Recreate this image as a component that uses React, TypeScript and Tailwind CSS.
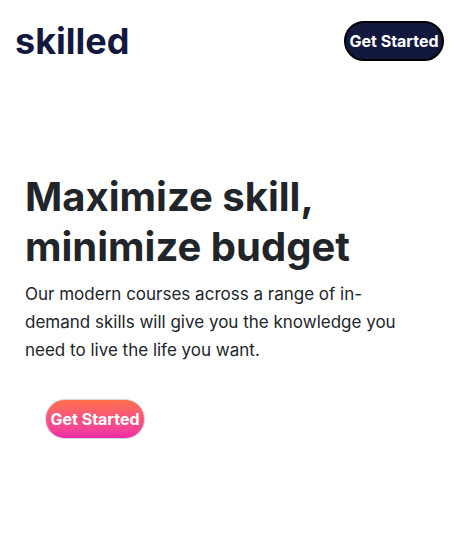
export default function App() {
  return (
    <div className="bg-white font-['Inter',sans-serif] text-[#212529]">
      <header className="flex items-center justify-between pt-[21px] pr-[17px] pl-[15px]">
        <a href="#" className="text-[36px] leading-10 font-bold text-[#13183f]">skilled</a>
        <button type="button" className="h-10 w-[100px] rounded-full border-2 border-black bg-[#13183f] text-base leading-6 font-bold whitespace-nowrap text-white">
          <span className="-mx-2">Get Started</span>
        </button>
      </header>
      <main className="px-[25px] pt-[111px]">
        <h1 className="text-[40px] leading-[50px] font-bold">Maximize skill, minimize budget</h1>
        <p className="mt-2 pr-5 text-[17px] leading-7">
          Our modern courses across a range of in-demand skills will give you the knowledge you need to live the life you want.
        </p>
        <button type="button" className="mt-[35px] ml-5 h-10 w-[100px] rounded-full border border-gray-300 bg-linear-to-b from-[#ff6f48] to-[#f02aa6] text-base leading-6 font-bold whitespace-nowrap text-white">
          <span className="-mx-2">Get Started</span>
        </button>
      </main>
    </div>
  );
}
